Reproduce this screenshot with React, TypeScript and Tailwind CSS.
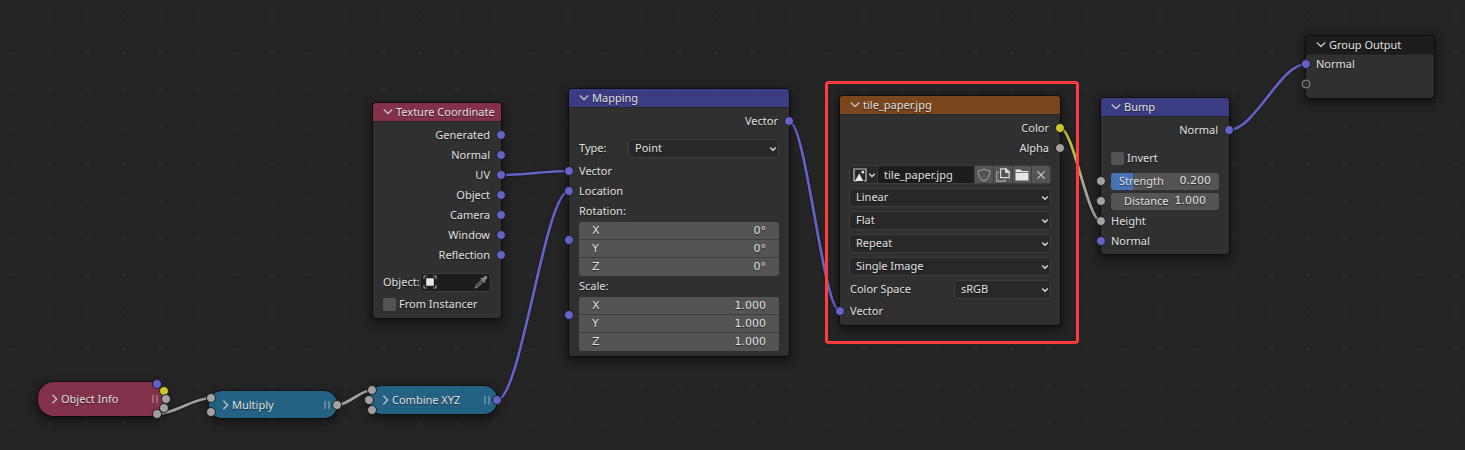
import type { ReactNode } from "react";
import clsx from "clsx";

type Tone = "vector" | "color" | "float" | "empty";

const toneClass: Record<Tone, string> = {
  vector: "bg-[#6363c7] border-[#1b1b26]",
  color: "bg-[#c7c729] border-[#1e1e14]",
  float: "bg-[#a1a1a1] border-[#1c1c1c]",
  empty: "bg-[#303030] border-[#8c8c8c]",
};

const toneHex = { vector: "#6363c7", color: "#c7c729", float: "#a1a1a1" };

function Socket({ tone, className }: { tone: Tone; className: string }) {
  return (
    <span
      className={clsx(
        "absolute -translate-x-1/2 -translate-y-1/2 rounded-full border",
        tone === "empty" ? "size-[9px]" : "size-[10px]",
        toneClass[tone],
        className,
      )}
    />
  );
}

function Chevron({ className }: { className?: string }) {
  return (
    <svg viewBox="0 0 10 10" className={clsx("size-[10px] shrink-0", className)} fill="none" stroke="currentColor" strokeWidth="1.4">
      <path d="M.8 2.4 5 6.6 9.2 2.4" />
    </svg>
  );
}

function Node({
  title,
  place,
  header,
  pad = "pt-1 pb-1",
  children,
}: {
  title: string;
  place: string;
  header: string;
  pad?: string;
  children: ReactNode;
}) {
  return (
    <section
      aria-label={title}
      className={clsx(
        "absolute rounded-[3px] bg-[#303030] shadow-[0_0_0_1px_rgba(0,0,0,0.45),0_3px_9px_2px_rgba(0,0,0,0.5)]",
        place,
      )}
    >
      <header className={clsx("flex h-[18px] items-center gap-[3px] rounded-t-[3px] pl-[10px] shadow-[0_1px_0_rgba(0,0,0,0.25)]", header)}>
        <button type="button" aria-label={`Collapse ${title}`} className="pb-px text-[#c0c0c0]">
          <Chevron />
        </button>
        <h2 className="whitespace-nowrap">{title}</h2>
      </header>
      <div className={pad}>{children}</div>
    </section>
  );
}

function Output({ label, tone = "vector" }: { label: string; tone?: Tone }) {
  return (
    <div className="relative flex h-5 items-center justify-end pr-[11px]">
      {label}
      <Socket tone={tone} className="left-full top-1/2" />
    </div>
  );
}

function Input({ label, tone = "vector" }: { label?: string; tone?: Tone }) {
  return (
    <div className="relative flex h-5 items-center pl-[10px]">
      {label}
      <Socket tone={tone} className="left-0 top-1/2" />
    </div>
  );
}

function Select({ value, label, id, className }: { value: string; label?: string; id?: string; className?: string }) {
  return (
    <div className={clsx("relative", className)}>
      <select
        id={id}
        aria-label={label}
        defaultValue={value}
        className="block h-[19px] w-full appearance-none rounded-[3px] border border-[#3d3d3d] bg-[#282828] pb-[2px] pl-[6px] pr-4 leading-[15px] [text-shadow:inherit]"
      >
        <option>{value}</option>
      </select>
      <svg viewBox="0 0 8 8" className="pointer-events-none absolute right-[2px] top-[6px] size-[8px]" fill="none" stroke="#d9d9d9" strokeWidth="1.3">
        <path d="M1.2 2.5 4 5.3 6.8 2.5" />
      </svg>
    </div>
  );
}

const numeric = "font-['DejaVu_Sans',sans-serif]";

function Fields({ name, value }: { name: string; value: string }) {
  return (
    <div className="relative px-[10px]">
      <div className="divide-y divide-[#3e3e3e] overflow-hidden rounded-[3px] bg-[#545454]">
        {["X", "Y", "Z"].map((axis) => (
          <label key={axis} className={clsx("flex h-[18px] items-center px-[13px]", numeric)}>
            {axis}
            <input aria-label={`${name} ${axis}`} defaultValue={value} className="w-full min-w-0 flex-1 bg-transparent text-right [text-shadow:inherit]" />
          </label>
        ))}
      </div>
      <Socket tone="vector" className="left-0 top-[18px]" />
    </div>
  );
}

function Check({ label }: { label: string }) {
  return (
    <label className="flex h-5 items-center gap-[3px] pl-[10px]">
      <input type="checkbox" className="size-[13px] appearance-none rounded-[2px] bg-[#545454] checked:bg-[#4772b3]" />
      {label}
    </label>
  );
}

function Slider({ label, value, fill = 0, pad }: { label: string; value: string; fill?: number; pad: string }) {
  return (
    <div className="relative flex h-5 items-center px-[10px]">
      <label className={clsx("relative flex h-[17px] flex-1 items-center justify-between overflow-hidden rounded-[3px] bg-[#545454]", pad)}>
        <span className="absolute inset-y-0 left-0 bg-[#4772b3]" style={{ width: `${fill * 100}%` }} />
        <span className="relative">{label}</span>
        <span className={clsx("relative", numeric)}>{value}</span>
        <input type="range" min="0" max="1" step="0.001" defaultValue={value} aria-label={label} className="absolute inset-0 size-full opacity-0" />
      </label>
      <Socket tone="float" className="left-0 top-1/2" />
    </div>
  );
}

function Collapsed({ title, place, children }: { title: string; place: string; children: ReactNode }) {
  return (
    <section
      aria-label={title}
      className={clsx("absolute flex items-center shadow-[0_0_0_1px_rgba(0,0,0,0.35),0_3px_8px_2px_rgba(0,0,0,0.45)]", place)}
    >
      <button type="button" aria-label={`Expand ${title}`} className="mr-px text-[#c0c0c0]">
        <Chevron className="-rotate-90" />
      </button>
      <h2 className="flex-1">{title}</h2>
      <span className="flex gap-[2px]">
        <span className="h-2 w-[2px] bg-white/25" />
        <span className="h-2 w-[2px] bg-white/25" />
      </span>
      {children}
    </section>
  );
}

const links = [
  { from: [157, 414], to: [211, 398], stroke: toneHex.float },
  { from: [337, 405], to: [372, 390], stroke: toneHex.float },
  { from: [497, 400], to: [569, 191], stroke: toneHex.vector },
  { from: [501, 175], to: [569, 171], stroke: toneHex.vector },
  { from: [789, 121], to: [840, 311], stroke: toneHex.vector },
  { from: [1060, 128], to: [1101, 221], stroke: "url(#color-to-float)" },
  { from: [1229, 130], to: [1306, 64], stroke: toneHex.vector },
];

function Links() {
  return (
    <svg className="absolute inset-0 size-full" fill="none" aria-hidden="true">
      <defs>
        <pattern id="grid" x="11" y="14" width="37" height="37" patternUnits="userSpaceOnUse">
          <rect width="4" height="4" fill="#292929" />
        </pattern>
        <linearGradient id="color-to-float" x1="0" y1="0" x2="0" y2="1">
          <stop offset="0.05" stopColor={toneHex.color} />
          <stop offset="0.65" stopColor={toneHex.float} />
        </linearGradient>
      </defs>
      <rect width="100%" height="100%" fill="url(#grid)" />
      {links.map(({ from: [x1, y1], to: [x2, y2], stroke }) => {
        const handle = (x2 - x1) / 3;
        const d = `M${x1} ${y1}C${x1 + handle} ${y1} ${x2 - handle} ${y2} ${x2} ${y2}`;
        return (
          <g key={d}>
            <path d={d} stroke="#1a1a1a" strokeOpacity="0.7" strokeWidth="4.8" />
            <path d={d} stroke={stroke} strokeWidth="2.7" />
          </g>
        );
      })}
    </svg>
  );
}

const toolButton = "flex w-[18px] items-center justify-center bg-[#545454]";

function ImagePicker() {
  return (
    <div className="flex h-[19px] gap-px overflow-hidden rounded-[3px] border border-[#3d3d3d] bg-[#3d3d3d]">
      <button type="button" aria-label="Browse images" className="flex w-[27px] items-center gap-[1px] bg-[#282828] pl-[3px]">
        <svg viewBox="0 0 14 14" className="size-[14px]" fill="none">
          <path d="M4 13H1V1h12v12h-2" stroke="#c4c4c4" strokeWidth="1.2" />
          <path d="M2 13 6.2 5.5 10.4 13Z" fill="#e6e6e6" />
          <circle cx="9.8" cy="4.2" r="1.4" fill="#e6e6e6" />
        </svg>
        <svg viewBox="0 0 8 8" className="size-[8px]" fill="none" stroke="#d9d9d9" strokeWidth="1.3">
          <path d="M1.2 2.7 4 5.5 6.8 2.7" />
        </svg>
      </button>
      <input aria-label="Image name" defaultValue="tile_paper.jpg" className="min-w-0 flex-1 bg-[#1d1d1d] pl-[6px] [text-shadow:inherit]" />
      <button type="button" aria-label="Fake user" className={toolButton}>
        <svg viewBox="0 0 14 14" className="size-[14px]" fill="none" stroke="#979797" strokeWidth="1.1">
          <path d="M7 1C5.4 2.1 3.4 2.7 1.2 2.7 1.2 7.6 2.6 11 7 13.2 11.4 11 12.8 7.6 12.8 2.7 10.6 2.7 8.6 2.1 7 1Z" />
        </svg>
      </button>
      <button type="button" aria-label="New image" className={toolButton}>
        <svg viewBox="0 0 14 14" className="size-[14px]" fill="none" stroke="#d6d6d6" strokeWidth="1.2">
          <path d="M4.6.8H10L13.2 4V9.6H4.6Z" />
          <path d="M9.6.8V4.4H13.2Z" fill="#d6d6d6" />
          <path d="M2.8 4.2H.8V13.2H9.4V11.4" stroke="#a8a8a8" />
        </svg>
      </button>
      <button type="button" aria-label="Open image" className={toolButton}>
        <svg viewBox="0 0 14 14" className="size-[14px]" fill="#e6e6e6">
          <path d="M.5 1.5H5.5L7 3H13.5V4.2H.5Z" />
          <path d="M.5 5H13.5V12.5H.5Z" />
        </svg>
      </button>
      <button type="button" aria-label="Unlink image" className={toolButton}>
        <svg viewBox="0 0 14 14" className="size-[14px]" fill="none" stroke="#c8c8c8" strokeWidth="1.3">
          <path d="M3.4 3.4 10.6 10.6M10.6 3.4 3.4 10.6" />
        </svg>
      </button>
    </div>
  );
}

export default function App() {
  return (
    <main className="relative min-h-screen w-full overflow-hidden bg-[#242424] font-['Noto_Sans',sans-serif] text-[11px] leading-[18px] text-[#e2e2e2] [text-shadow:0_1px_1px_rgba(0,0,0,0.6)]">
      <Links />

      <Collapsed title="Object Info" place="left-[38px] top-[382px] h-[34px] w-[127px] rounded-[16px] bg-[#83314a] pl-[12px] pr-[7px]">
        <Socket tone="vector" className="left-[119px] top-[2px]" />
        <Socket tone="color" className="left-[126px] top-[9px]" />
        <Socket tone="float" className="left-[128px] top-[17px]" />
        <Socket tone="float" className="left-[126px] top-[26px]" />
        <Socket tone="float" className="left-[119px] top-[32px]" />
      </Collapsed>

      <Collapsed title="Multiply" place="left-[209px] top-[391px] h-[27px] w-[128px] rounded-[13px] bg-[#246283] pl-[12px] pr-[7px]">
        <Socket tone="float" className="left-[2px] top-[7px]" />
        <Socket tone="float" className="left-[2px] top-[21px]" />
        <Socket tone="float" className="left-full top-1/2" />
      </Collapsed>

      <Collapsed title="Combine XYZ" place="left-[369px] top-[386px] h-[28px] w-[128px] rounded-[13px] bg-[#246283] pl-[12px] pr-[7px]">
        <Socket tone="float" className="left-[3px] top-[4px]" />
        <Socket tone="float" className="left-0 top-1/2" />
        <Socket tone="float" className="left-[3px] top-[24px]" />
        <Socket tone="vector" className="left-full top-1/2" />
      </Collapsed>

      <Node title="Texture Coordinate" place="left-[373px] top-[103px] w-[128px]" header="bg-[#83314a]">
        {["Generated", "Normal", "UV", "Object", "Camera", "Window", "Reflection"].map((name) => (
          <Output key={name} label={name} />
        ))}
        <div className="mt-[7px] mb-[2px] flex h-5 items-center pl-[10px] pr-[10px]">
          <label htmlFor="object" className="whitespace-nowrap">Object:</label>
          <div className="flex h-[19px] min-w-0 flex-1 items-center rounded-[3px] border border-[#3d3d3d] bg-[#1d1d1d] px-[2px]">
            <svg viewBox="0 0 14 14" className="size-[14px] shrink-0" fill="none">
              <path d="M1 4V1H4M10 1H13V4M13 10V13H10M4 13H1V10" stroke="#8f8f8f" strokeWidth="1.2" />
              <rect x="3.2" y="3.2" width="7.6" height="7.6" rx="0.6" fill="#e6e6e6" />
            </svg>
            <input id="object" className="min-w-0 flex-1 bg-transparent" />
            <button type="button" aria-label="Pick object">
              <svg viewBox="0 0 14 14" className="size-[14px]" fill="none">
                <path d="M8 4.8 2.2 10.6 1.4 12.8 3.6 12 9.4 6.2" stroke="#7d7d7d" strokeWidth="1.1" />
                <path d="M6.2 3.4 7.4 2.4 8.6 3.2 10.2 1.4C12-.2 14.2 2 12.8 3.8L10.9 5.5 11.9 6.8 10.7 8Z" fill="#858585" />
              </svg>
            </button>
          </div>
        </div>
        <Check label="From Instancer" />
      </Node>

      <Node title="Mapping" place="left-[569px] top-[89px] w-[220px]" header="bg-[#3c3c83]" pad="pt-1 pb-[5px]">
        <Output label="Vector" />
        <div className="mt-[7px] mb-[3px] flex h-5 items-center px-[10px]">
          <label htmlFor="type" className="w-[49px]">Type:</label>
          <Select id="type" value="Point" className="flex-1" />
        </div>
        <Input label="Vector" />
        <Input label="Location" />
        <div className="h-[21px] px-[10px] leading-[20px]">Rotation:</div>
        <Fields name="Rotation" value="0°" />
        <div className="h-[21px] px-[10px] leading-[20px]">Scale:</div>
        <Fields name="Scale" value="1.000" />
      </Node>

      <Node title="tile_paper.jpg" place="left-[840px] top-[96px] w-[220px]" header="bg-[#79461d]">
        <Output label="Color" tone="color" />
        <Output label="Alpha" tone="float" />
        <div className="mt-[7px] mb-[2px] flex flex-col gap-1 pl-[9px] pr-[9px]">
          <ImagePicker />
          <Select value="Linear" label="Interpolation" />
          <Select value="Flat" label="Projection" />
          <Select value="Repeat" label="Extension" />
          <Select value="Single Image" label="Source" />
          <div className="flex h-[19px] items-start justify-between pl-px">
            <label htmlFor="space">Color Space</label>
            <Select id="space" value="sRGB" className="w-[97px]" />
          </div>
        </div>
        <Input label="Vector" />
      </Node>

      <Node title="Bump" place="left-[1101px] top-[98px] w-[128px]" header="bg-[#3c3c83]" pad="pt-1 pb-[3px]">
        <Output label="Normal" />
        <div className="mt-2 mb-[3px]">
          <Check label="Invert" />
        </div>
        <Slider label="Strength" value="0.200" fill={0.2} pad="px-[8px]" />
        <Slider label="Distance" value="1.000" pad="px-[13px]" />
        <Input label="Height" tone="float" />
        <Input label="Normal" />
      </Node>

      <Node title="Group Output" place="left-[1306px] top-[36px] w-[128px]" header="bg-[#1d1d1d]" pad="pb-1">
        <Input label="Normal" />
        <Input tone="empty" />
      </Node>

      <div className="pointer-events-none absolute left-[825px] top-[81px] h-[263px] w-[254px] rounded-[4px] border-[3px] border-[#ff3b3b]" />
    </main>
  );
}
